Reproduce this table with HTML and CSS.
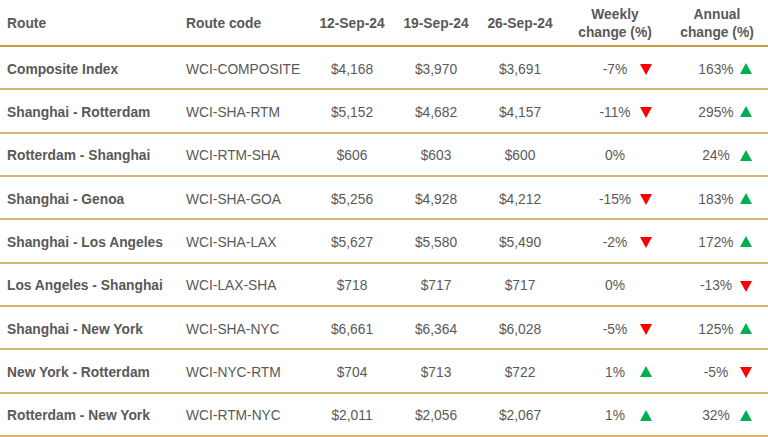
FILE: index.html
```html
<!DOCTYPE html>
<html>
<head>
<meta charset="utf-8">
<link rel="stylesheet" href="styles.css">
</head>
<body>
<div class="table">
  <div class="row head">
    <div class="c route">Route</div>
    <div class="c code">Route code</div>
    <div class="c num">12-Sep-24</div>
    <div class="c num">19-Sep-24</div>
    <div class="c num">26-Sep-24</div>
    <div class="c hchg">Weekly<br>change (%)</div>
    <div class="c hchg">Annual<br>change (%)</div>
  </div>

  <div class="row">
    <div class="c route">Composite Index</div>
    <div class="c code">WCI-COMPOSITE</div>
    <div class="c num">$4,168</div><div class="c num">$3,970</div><div class="c num">$3,691</div>
    <div class="c chg wk"><span class="v">-7%</span><span class="tri down"></span></div>
    <div class="c chg an"><span class="v">163%</span><span class="tri up"></span></div>
  </div>

  <div class="row">
    <div class="c route">Shanghai - Rotterdam</div>
    <div class="c code">WCI-SHA-RTM</div>
    <div class="c num">$5,152</div><div class="c num">$4,682</div><div class="c num">$4,157</div>
    <div class="c chg wk"><span class="v">-11%</span><span class="tri down"></span></div>
    <div class="c chg an"><span class="v">295%</span><span class="tri up"></span></div>
  </div>

  <div class="row">
    <div class="c route">Rotterdam - Shanghai</div>
    <div class="c code">WCI-RTM-SHA</div>
    <div class="c num">$606</div><div class="c num">$603</div><div class="c num">$600</div>
    <div class="c chg wk"><span class="v">0%</span></div>
    <div class="c chg an"><span class="v">24%</span><span class="tri up"></span></div>
  </div>

  <div class="row">
    <div class="c route">Shanghai - Genoa</div>
    <div class="c code">WCI-SHA-GOA</div>
    <div class="c num">$5,256</div><div class="c num">$4,928</div><div class="c num">$4,212</div>
    <div class="c chg wk"><span class="v">-15%</span><span class="tri down"></span></div>
    <div class="c chg an"><span class="v">183%</span><span class="tri up"></span></div>
  </div>

  <div class="row">
    <div class="c route">Shanghai - Los Angeles</div>
    <div class="c code">WCI-SHA-LAX</div>
    <div class="c num">$5,627</div><div class="c num">$5,580</div><div class="c num">$5,490</div>
    <div class="c chg wk"><span class="v">-2%</span><span class="tri down"></span></div>
    <div class="c chg an"><span class="v">172%</span><span class="tri up"></span></div>
  </div>

  <div class="row">
    <div class="c route">Los Angeles - Shanghai</div>
    <div class="c code">WCI-LAX-SHA</div>
    <div class="c num">$718</div><div class="c num">$717</div><div class="c num">$717</div>
    <div class="c chg wk"><span class="v">0%</span></div>
    <div class="c chg an"><span class="v">-13%</span><span class="tri down"></span></div>
  </div>

  <div class="row">
    <div class="c route">Shanghai - New York</div>
    <div class="c code">WCI-SHA-NYC</div>
    <div class="c num">$6,661</div><div class="c num">$6,364</div><div class="c num">$6,028</div>
    <div class="c chg wk"><span class="v">-5%</span><span class="tri down"></span></div>
    <div class="c chg an"><span class="v">125%</span><span class="tri up"></span></div>
  </div>

  <div class="row">
    <div class="c route">New York - Rotterdam</div>
    <div class="c code">WCI-NYC-RTM</div>
    <div class="c num">$704</div><div class="c num">$713</div><div class="c num">$722</div>
    <div class="c chg wk"><span class="v">1%</span><span class="tri up"></span></div>
    <div class="c chg an"><span class="v">-5%</span><span class="tri down"></span></div>
  </div>

  <div class="row">
    <div class="c route">Rotterdam - New York</div>
    <div class="c code">WCI-RTM-NYC</div>
    <div class="c num">$2,011</div><div class="c num">$2,056</div><div class="c num">$2,067</div>
    <div class="c chg wk"><span class="v">1%</span><span class="tri up"></span></div>
    <div class="c chg an"><span class="v">32%</span><span class="tri up"></span></div>
  </div>
</div>
</body>
</html>
```

FILE: styles.css
```css
html, body {
  margin: 0;
  padding: 0;
  background: #ffffff;
}
body {
  font-family: "Liberation Sans", Arial, sans-serif;
  font-size: 13.8px;
  color: #595959;
}
.table {
  width: 768px;
  display: flex;
  flex-direction: column;
}
.row {
  display: grid;
  grid-template-columns: 180px 128px 88px 80px 88px 100px 104px;
  align-items: center;
  height: 41.33px;
  border-bottom: 2px solid #d8b66f;
}
.row .c {
  padding-top: 3px;
}
.row.head {
  height: 45px;
  border-bottom: 2px solid #c99a3e;
  font-weight: bold;
  line-height: 18px;
}
.row.head .c {
  padding-top: 3px;
}
.c {
  white-space: nowrap;
}
.route {
  padding-left: 7px;
  font-weight: bold;
}
.code {
  padding-left: 6px;
}
.num {
  text-align: center;
}
.hchg {
  text-align: center;
  padding-left: 2px;
}
.chg {
  display: grid;
  align-items: center;
}
.chg.wk {
  grid-template-columns: 26px 50px 1fr;
}
.chg.an {
  grid-template-columns: 28px 48px 1fr;
}
.chg .v {
  grid-column: 2;
  text-align: center;
}
.tri {
  grid-column: 3;
  width: 0;
  height: 0;
  border-left: 6px solid transparent;
  border-right: 6px solid transparent;
}
.tri.down {
  border-top: 11px solid #ff0000;
  margin-top: 1px;
}
.tri.up {
  border-bottom: 11px solid #00b050;
  margin-top: -1px;
}
```
